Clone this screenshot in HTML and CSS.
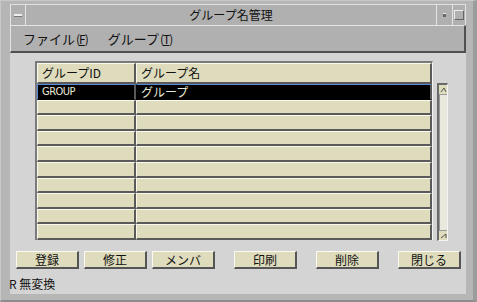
FILE: index.html
```html
<!DOCTYPE html>
<html lang="ja">
<head>
    <meta charset="UTF-8">
    <title>グループ名管理</title>
    <link rel="stylesheet" href="styles.css">
</head>
<body>
    <div class="frame">
        <div class="titlebar">
            <div class="tb-btn menu-btn"><span class="dash"></span></div>
            <div class="title">グループ名管理</div>
            <div class="tb-btn min-btn"><span class="dot"></span></div>
            <div class="tb-btn max-btn"><span class="box"></span></div>
        </div>
        <div class="menubar">
            <span class="menu-item">ファイル<span class="key">(<u>F</u>)</span></span>
            <span class="menu-item">グループ<span class="key">(<u>T</u>)</span></span>
        </div>
        <div class="content">
            <div class="list-area">
                <div class="table">
                    <div class="row head">
                        <div class="cell c1">グループID</div>
                        <div class="cell c2">グループ名</div>
                    </div>
                    <div class="row selected">
                        <div class="cell c1 mono">GROUP</div>
                        <div class="cell c2">グループ</div>
                    </div>
                    <div class="row"><div class="cell c1"></div><div class="cell c2"></div></div>
                    <div class="row"><div class="cell c1"></div><div class="cell c2"></div></div>
                    <div class="row"><div class="cell c1"></div><div class="cell c2"></div></div>
                    <div class="row"><div class="cell c1"></div><div class="cell c2"></div></div>
                    <div class="row"><div class="cell c1"></div><div class="cell c2"></div></div>
                    <div class="row"><div class="cell c1"></div><div class="cell c2"></div></div>
                    <div class="row"><div class="cell c1"></div><div class="cell c2"></div></div>
                    <div class="row"><div class="cell c1"></div><div class="cell c2"></div></div>
                    <div class="row"><div class="cell c1"></div><div class="cell c2"></div></div>
                </div>
                <div class="scrollbar">
                    <div class="arrow up">
                        <svg width="7" height="6" viewBox="0 0 7 6"><path d="M1 5 L4 1 L6 5" fill="none" stroke="#555" stroke-width="1"/></svg>
                    </div>
                    <div class="trough"></div>
                    <div class="arrow down">
                        <svg width="7" height="6" viewBox="0 0 7 6"><path d="M1 5 L6 1 L6 5" fill="none" stroke="#555" stroke-width="1"/></svg>
                    </div>
                </div>
            </div>
            <div class="buttons">
                <button class="btn">登録</button>
                <button class="btn">修正</button>
                <button class="btn">メンバ</button>
                <button class="btn sep">印刷</button>
                <button class="btn sep">削除</button>
                <button class="btn sep">閉じる</button>
            </div>
            <div class="status">R 無変換</div>
        </div>
    </div>
</body>
</html>
```

FILE: styles.css
```css
body {
    margin: 0;
    font-family: "Noto Sans CJK JP", "DejaVu Sans", sans-serif;
    font-size: 12px;
    color: #111;
    background: #b8b8b8;
}
.frame {
    width: 477px;
    height: 302px;
    box-sizing: border-box;
    padding: 3px 7px 6px 9px;
    display: flex;
    flex-direction: column;
    background: #b6b6b6;
    border-right: 4px solid #9c9c9c;
    border-left: 1px solid #c8c8c8;
    border-top: 1px solid #c8c8c8;
    border-bottom: 2px solid #8c8c8c;
}
.titlebar {
    height: 21px;
    display: flex;
    align-items: stretch;
    background: #b0b0b0;
    border-top: 1px solid #e0e0e0;
    box-sizing: border-box;
}
.tb-btn {
    display: flex;
    align-items: center;
    justify-content: center;
    border-left: 1px solid #e4e4e4;
    border-right: 1px solid #e4e4e4;
}
.menu-btn {
    width: 14px;
}
.dash {
    width: 8px;
    height: 2px;
    background: #eee;
    border-bottom: 1px solid #777;
}
.title {
    flex: 1;
    text-align: center;
    line-height: 19px;
    font-size: 12px;
    color: #111;
}
.min-btn {
    width: 15px;
}
.dot {
    width: 3px;
    height: 3px;
    background: #666;
    border-top: 1px solid #eee;
}
.max-btn {
    width: 12px;
    border-left: none;
}
.box {
    width: 8px;
    height: 8px;
    border: 1px solid #666;
    border-top-color: #eee;
    border-left-color: #eee;
}
.menubar {
    height: 28px;
    display: flex;
    align-items: center;
    gap: 20px;
    padding-left: 12px;
    box-sizing: border-box;
    background: #b0b0b0;
    border-top: 1px solid #e4e4e4;
    border-left: 1px solid #e4e4e4;
    border-bottom: 2px solid #505050;
    border-right: 2px solid #505050;
    font-size: 13px;
}
.key {
    letter-spacing: -1px;
    font-size: 12px;
    padding-left: 1px;
}
.content {
    flex: 1;
    background: #d4d4d4;
    display: flex;
    flex-direction: column;
    padding: 8px 0 0 6px;
}
.list-area {
    display: flex;
    align-items: flex-start;
    gap: 4px;
    margin-left: 19px;
}
.table {
    width: 398px;
    border-top: 2px solid #7a7a7a;
    border-left: 2px solid #7a7a7a;
    border-right: 1px solid #f4f4f4;
    background: #7a7a7a;
    box-sizing: border-box;
}
.row {
    display: flex;
    height: 15.6px;
}
.row.head {
    height: 21px;
}
.cell {
    box-sizing: border-box;
    background: #dedcbc;
    border-top: 1px solid #f8f8ec;
    border-left: 1px solid #f8f8ec;
    border-bottom: 2px solid #5a5a5a;
    border-right: 2px solid #5a5a5a;
    padding-left: 4px;
    white-space: nowrap;
    overflow: hidden;
}
.head .cell {
    line-height: 18px;
    font-size: 12px;
}
.c1 {
    width: 99px;
}
.c2 {
    flex: 1;
}
.selected .cell {
    background: #000;
    color: #e8e8d8;
    border-top: 1px solid #5a8ad8;
    border-left: 1px solid #000;
    border-bottom: 1px solid #000;
    line-height: 13px;
}
.selected .c1 {
    border-left: 1px solid #5a8ad8;
}
.mono {
    font-family: "DejaVu Sans Condensed", "Liberation Sans Narrow", sans-serif;
    font-size: 11px;
    letter-spacing: -0.5px;
}
.scrollbar {
    margin-top: 22px;
    width: 11px;
    height: 158px;
    box-sizing: border-box;
    border-left: 2px solid #6a6a6a;
    border-top: 2px solid #6a6a6a;
    border-right: 1px solid #f4f4f4;
    border-bottom: 1px solid #f4f4f4;
    display: flex;
    flex-direction: column;
    background: #e8e8dc;
}
.arrow {
    height: 9px;
    display: flex;
    align-items: center;
    justify-content: center;
    background: #dedcbc;
    border-bottom: 1px solid #999;
}
.arrow.down {
    border-bottom: none;
    border-top: 1px solid #999;
}
.trough {
    flex: 1;
    border-left: 1px solid #999;
}
.buttons {
    display: flex;
    gap: 5px;
    margin-top: 10px;
}
.btn {
    width: 63px;
    height: 18px;
    padding: 0;
    font-family: "Noto Sans CJK JP", sans-serif;
    font-size: 12px;
    line-height: 14px;
    color: #111;
    background: #dedcbc;
    border: 1px solid #555;
    border-top-color: #fafaf0;
    border-left-color: #fafaf0;
    border-right-width: 2px;
    border-bottom-width: 2px;
}
.btn.sep {
    margin-left: 14px;
}
.status {
    margin-top: 8px;
    margin-left: -7px;
    font-size: 12px;
    line-height: 14px;
}
```
